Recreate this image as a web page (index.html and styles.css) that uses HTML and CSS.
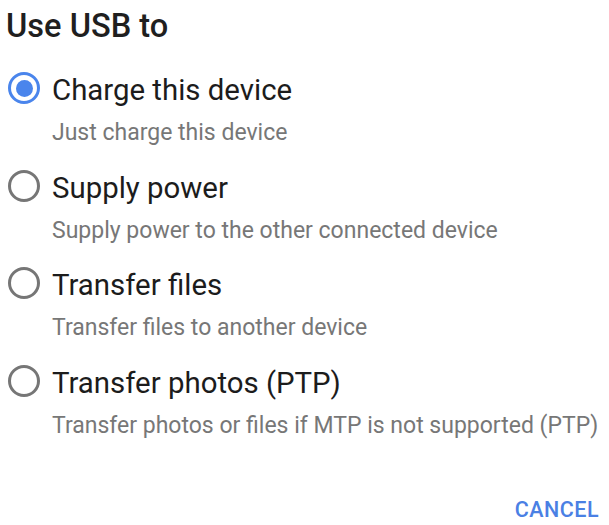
FILE: index.html
```html
<!DOCTYPE html>
<html>
<head>
<meta charset="utf-8">
<link rel="stylesheet" href="styles.css">
</head>
<body>
<div class="dialog">
  <h1 class="title">Use USB to</h1>
  <div class="options">
    <div class="option">
      <span class="radio checked"><span class="dot"></span></span>
      <div class="texts">
        <div class="label">Charge this device</div>
        <div class="desc">Just charge this device</div>
      </div>
    </div>
    <div class="option">
      <span class="radio"></span>
      <div class="texts">
        <div class="label">Supply power</div>
        <div class="desc">Supply power to the other connected device</div>
      </div>
    </div>
    <div class="option">
      <span class="radio"></span>
      <div class="texts">
        <div class="label">Transfer files</div>
        <div class="desc">Transfer files to another device</div>
      </div>
    </div>
    <div class="option">
      <span class="radio"></span>
      <div class="texts">
        <div class="label">Transfer photos (PTP)</div>
        <div class="desc">Transfer photos or files if MTP is not supported (PTP)</div>
      </div>
    </div>
  </div>
  <div class="actions">
    <span class="btn">CANCEL</span>
  </div>
</div>
</body>
</html>
```
FILE: styles.css
```css
html, body {
  margin: 0;
  padding: 0;
  background: #ffffff;
}
body {
  font-family: Roboto, "Noto Sans", sans-serif;
  width: 609px;
  height: 525px;
  overflow: hidden;
}
.dialog {
  display: flex;
  flex-direction: column;
}
.title {
  margin: 0;
  padding: 7px 0 0 6px;
  font-size: 32.6px;
  font-weight: 500;
  color: #1f1f1f;
  line-height: 38px;
}
.options {
  display: flex;
  flex-direction: column;
  gap: 22.5px;
  padding-top: 27px;
}
.option {
  display: flex;
  align-items: flex-start;
  gap: 12px;
  padding-left: 8px;
}
.radio {
  box-sizing: border-box;
  width: 32px;
  height: 32px;
  border-radius: 50%;
  border: 3px solid #767676;
  margin-top: 0;
  flex: none;
  display: flex;
  align-items: center;
  justify-content: center;
}
.radio.checked {
  border-color: #4a85ec;
}
.dot {
  width: 17px;
  height: 17px;
  border-radius: 50%;
  background: #4a85ec;
}
.texts {
  display: flex;
  flex-direction: column;
}
.label {
  font-size: 29.4px;
  line-height: 36px;
  color: #1c1c1c;
}
.desc {
  font-size: 23px;
  line-height: 28px;
  margin-top: 11px;
  color: #777777;
}
.actions {
  display: flex;
  justify-content: flex-end;
  padding: 57px 10px 0 0;
}
.btn {
  font-size: 21.5px;
  line-height: 26px;
  font-weight: 500;
  color: #4a80e4;
  letter-spacing: 0.5px;
}
```
